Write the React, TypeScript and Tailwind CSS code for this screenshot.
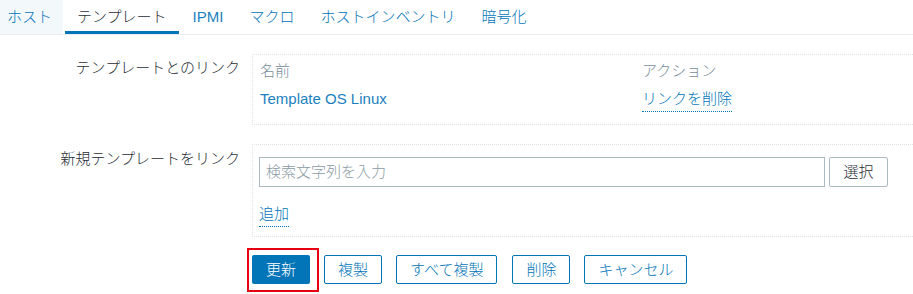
import React from "react"

const tabs = ["ホスト", "テンプレート", "IPMI", "マクロ", "ホストインベントリ", "暗号化"]
const actions = ["複製", "すべて複製", "削除", "キャンセル"]

const font = { fontFamily: '"Liberation Sans", "Noto Sans CJK JP", sans-serif' }

function DottedLink({ children }: { children: React.ReactNode }) {
  return (
    <span className="inline-block font-light leading-[18px] pb-[3px] border-b border-dotted border-[#0275b8] text-[#0275b8]">
      {children}
    </span>
  )
}

export default function App() {
  return (
    <div className="w-[913px] h-[294px] overflow-hidden bg-white text-[15px] text-[#1f2c33]" style={font}>
      {/* tabs */}
      <div className="flex gap-[2px] h-[35px] border-b border-[#ebeef0]">
        {tabs.map((t, i) => (
          <div
            key={t}
            className={
              i === 0
                ? "h-[34px] pl-[7px] pr-[11px] flex items-center leading-[18px] text-[#0275b8] bg-[#f3f8fb] border-b-[3px] border-transparent"
                : i === 1
                ? "h-[34px] px-3 flex items-center leading-[18px] text-[#1f2c33] border-b-[3px] border-[#0275b8]"
                : "h-[34px] px-3 flex items-center leading-[18px] text-[#0275b8] border-b-[3px] border-transparent"
            }
          >
            <span className={t === "IPMI" ? "pt-[3px] text-[#1a7fc0]" : "pt-[3px] font-light"}>{t}</span>
          </div>
        ))}
      </div>

      <div className="pt-[19px] flex flex-col">
        {/* linked templates */}
        <div className="flex gap-3">
          <div className="w-[240px] shrink-0 text-right font-light leading-[18px] pt-[5px]">テンプレートとのリンク</div>
          <div className="flex-1 h-[71px] border border-r-0 border-dotted border-[#dfe4e7] pl-[7px] pt-[7px]">
            <div className="grid grid-cols-[382px_1fr] font-light leading-[18px] text-[#768d99]">
              <span>名前</span>
              <span>アクション</span>
            </div>
            <div className="grid grid-cols-[382px_1fr] leading-[18px] mt-[10px]">
              <span className="text-[#1a7fc0]">Template OS Linux</span>
              <span>
                <DottedLink>リンクを削除</DottedLink>
              </span>
            </div>
          </div>
        </div>

        {/* new template link */}
        <div className="flex gap-3 mt-[19px]">
          <div className="w-[240px] shrink-0 text-right font-light leading-[18px] pt-[6px]">新規テンプレートをリンク</div>
          <div className="flex-1 h-[93px] border border-r-0 border-dotted border-[#dfe4e7] pl-[6px] pt-[12px]">
            <div className="flex items-center gap-[4px]">
              <div className="w-[566px] h-[30px] border border-[#acbbc2] flex items-center pl-[6px] font-light text-[#8a9ba4] leading-[18px]">
                検索文字列を入力
              </div>
              <button className="w-[59px] h-[30px] border border-[#acbbc2] rounded-[2px] bg-white font-light text-[#1f2c33] leading-[18px]">
                選択
              </button>
            </div>
            <div className="mt-[16px]">
              <DottedLink>追加</DottedLink>
            </div>
          </div>
        </div>

        {/* buttons */}
        <div className="flex gap-[14px] mt-[18px] pl-[252px]">
          <div className="relative">
            <button className="h-[29px] px-[14px] rounded-[2px] bg-[#0275b8] font-light text-white leading-[18px]">更新</button>
            <div className="absolute -left-[5px] -top-[7px] -right-[9px] -bottom-[8px] border-2 border-[#e60012]" />
          </div>
          {actions.map((a, i) => (
            <button
              key={a}
              className={
                i === 2
                  ? "ml-px h-[29px] px-[13px] rounded-[2px] border border-[#0275b8] bg-white font-light text-[#0275b8] leading-[18px]"
                  : "h-[29px] px-[13px] rounded-[2px] border border-[#0275b8] bg-white font-light text-[#0275b8] leading-[18px]"
              }
            >
              {a}
            </button>
          ))}
        </div>
      </div>
    </div>
  )
}
